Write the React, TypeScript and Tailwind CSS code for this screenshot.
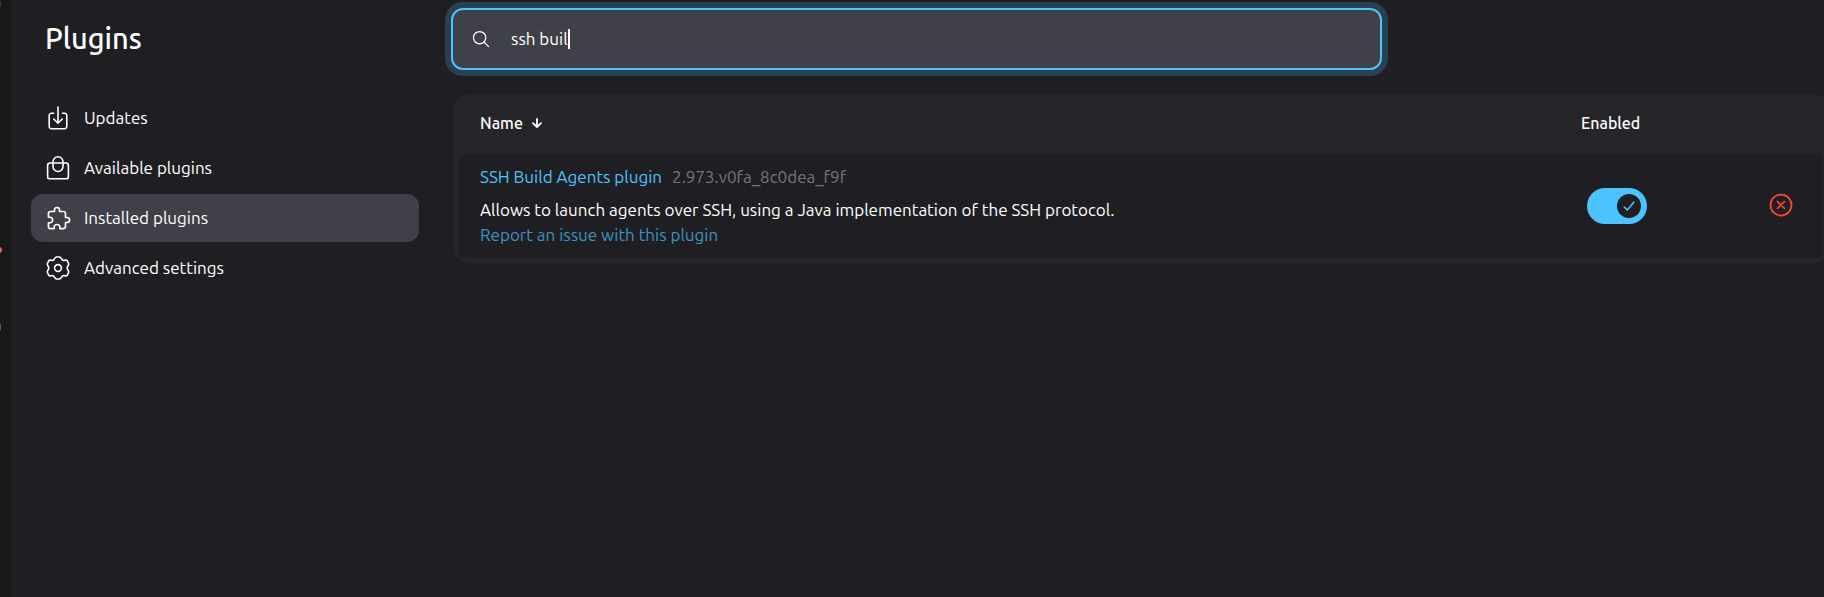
import React from "react";
import {
  IoCloseCircleOutline,
  IoExtensionPuzzleOutline,
  IoSearchOutline,
} from "react-icons/io5";

function UpdatesIcon() {
  return (
    <svg viewBox="0 0 24 24" className="size-6" fill="none" stroke="currentColor" strokeWidth="1.6" strokeLinecap="round" strokeLinejoin="round" aria-hidden="true">
      <path d="M7.6 7.3H5.4a2.2 2.2 0 0 0-2.2 2.2v11a2.2 2.2 0 0 0 2.2 2.2h13.2a2.2 2.2 0 0 0 2.2-2.2v-11a2.2 2.2 0 0 0-2.2-2.2h-2.2" />
      <path d="M12 1v16M7.8 13l4.2 4.2 4.2-4.2" />
    </svg>
  );
}

function BagIcon() {
  return (
    <svg viewBox="0 0 24 24" className="size-6" fill="none" stroke="currentColor" strokeWidth="1.6" strokeLinecap="round" strokeLinejoin="round" aria-hidden="true">
      <rect x="1.600" y="7" width="20.800" height="15.800" rx="2.400" />
      <path d="M7 7V5.800a5 5 0 0 1 10 0V10.500a5 5 0 0 1-10 0Z" />
    </svg>
  );
}

function GearIcon() {
  return (
    <svg viewBox="0 0 24 24" className="size-6" fill="none" stroke="currentColor" strokeWidth="1.6" strokeLinejoin="round" aria-hidden="true">
      <circle cx="12" cy="12" r="3.4" />
      <path d="M10.300 1h3.400c1.500 0 1.700 2.700 3.300 3.300 1.500.6 3-1 4.100.3l1.500 2.800c.8 1.600-1.400 2.600-1.400 4.600s2.200 3 1.400 4.600l-1.500 2.800c-1.100 1.300-2.600-.3-4.100.3-1.600.6-1.800 3.300-3.300 3.300h-3.400c-1.500 0-1.700-2.700-3.300-3.300-1.500-.6-3 1-4.100-.3l-1.500-2.800C.6 15 2.800 14 2.800 12S.6 9 1.400 7.400l1.500-2.800C4 3.300 5.500 4.900 7 4.300 8.600 3.700 8.800 1 10.300 1Z" />
    </svg>
  );
}

const navItems = [
  { label: "Updates", icon: <UpdatesIcon /> },
  { label: "Available plugins", icon: <BagIcon /> },
  { label: "Installed plugins", icon: <IoExtensionPuzzleOutline className="-mr-0.5 size-[26px]" />, current: true },
  { label: "Advanced settings", icon: <GearIcon /> },
];

function Sidebar() {
  return (
    <aside className="w-[408px] shrink-0 pl-5">
      <h1 className="pt-5 pl-3.5 text-[29px] leading-9 font-medium">Plugins</h1>
      <nav aria-label="Plugins" className="mt-[38px] flex flex-col gap-0.5">
        {navItems.map((item) => (
          <a
            key={item.label}
            href="#"
            aria-current={item.current ? "page" : undefined}
            className={`flex h-12 items-center gap-3.5 rounded-xl px-[15px] ${item.current ? "bg-[#404049]" : ""}`}
          >
            {item.icon}
            {item.label}
          </a>
        ))}
      </nav>
    </aside>
  );
}

function SearchBar() {
  return (
    <label className="ml-[-2px] flex h-[62px] w-full max-w-[931px] items-center gap-5 rounded-xl border-2 border-[#4cc3ff] bg-[#404049] pl-[18px] ring-6 ring-[#294050]">
      <IoSearchOutline className="size-5" aria-hidden="true" />
      <span className="flex items-center">
        <input
          type="text"
          aria-label="Search installed plugins"
          defaultValue="ssh buil"
          className="field-sizing-content bg-transparent caret-transparent outline-none"
        />
        <span className="h-5 w-0.5 bg-white" aria-hidden="true" />
      </span>
    </label>
  );
}

function PluginTable() {
  return (
    <div className="mt-6 mr-[-5px] rounded-2xl bg-[#26262a] px-1.5 pb-[5px]">
      <table className="w-full border-separate border-spacing-0 text-left">
        <thead>
          <tr className="h-[60px] text-base">
            <th scope="col" className="pt-0 pb-0.5 pl-[21px] font-medium">
              <button type="button" className="inline-flex items-center gap-2">
                Name
                <svg viewBox="0 0 12 12" className="size-3" fill="none" stroke="currentColor" strokeWidth="1.8" strokeLinecap="round" strokeLinejoin="round" aria-hidden="true">
                  <path d="M6 2v8M2 6.200 6 10l4-3.800" />
                </svg>
              </button>
            </th>
            <th scope="col" className="w-[148px] pb-0.5 font-medium">Enabled</th>
            <th scope="col" aria-label="Uninstall" className="w-[94px]" />
          </tr>
        </thead>
        <tbody>
          <tr className="h-[104px]">
            <td className="rounded-l-md bg-[#1f1f23] pt-0 pb-0.5 pl-[21px] leading-[25px]">
              <div className="flex gap-2.5">
                <a href="#" className="text-[#4cc3ff]">SSH Build Agents plugin</a>
                <span className="text-[#76757a]">2.973.v0fa_8c0dea_f9f</span>
              </div>
              <p className="mt-2">
                Allows to launch agents over SSH, using a Java implementation of the SSH protocol.
              </p>
              <a href="#" className="block text-[#3d93c0]">Report an issue with this plugin</a>
            </td>
            <td className="bg-[#1f1f23] pt-0 pb-0 pl-1.5">
              <label className="flex h-9 w-[60px] items-center justify-end rounded-full bg-[#4cc3ff] pr-1.5">
                <input type="checkbox" defaultChecked aria-label="Enable SSH Build Agents plugin" className="sr-only" />
                <span className="flex size-6 items-center justify-center rounded-full bg-[#1f1f23] text-[#4cc3ff]">
                  <svg viewBox="0 0 12 12" className="size-3" fill="none" stroke="currentColor" strokeWidth="1.6" strokeLinecap="round" strokeLinejoin="round" aria-hidden="true">
                    <path d="M1.200 7 4.400 10 10.800 2.200" />
                  </svg>
                </span>
              </label>
            </td>
            <td className="rounded-r-md bg-[#1f1f23] pb-0.5 pl-[38px]">
              <button type="button" aria-label="Uninstall SSH Build Agents plugin" className="flex text-[#ff4534]">
                <IoCloseCircleOutline className="size-7" />
              </button>
            </td>
          </tr>
        </tbody>
      </table>
    </div>
  );
}

export default function App() {
  return (
    <div className="flex min-h-screen overflow-hidden bg-[#1f1f23] font-['Ubuntu','Noto_Sans',sans-serif] text-[17px] leading-6 text-white">
      <div className="relative w-[11px] shrink-0 overflow-hidden bg-[#181818]">
        <span className="absolute top-0 -left-1 h-2 w-[5px] rounded-full bg-[#16405c]" />
        <span className="absolute top-[247px] -left-1 h-1.5 w-1.5 rounded-full bg-[#f0605c]" />
        <span className="absolute top-[323px] -left-1 h-2 w-[5px] rounded-full bg-[#5a5a5a]" />
      </div>
      <Sidebar />
      <main className="min-w-0 flex-1 pt-2 pl-[34px]">
        <SearchBar />
        <PluginTable />
      </main>
    </div>
  );
}
